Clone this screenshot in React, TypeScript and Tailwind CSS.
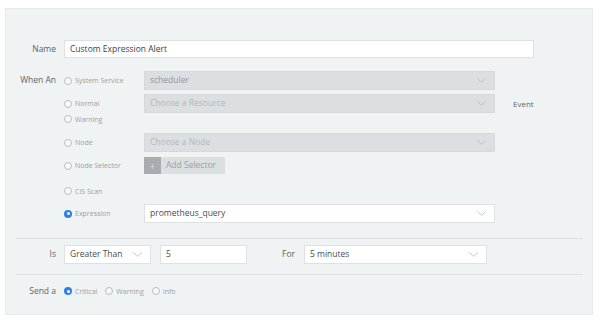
import React from "react";

const FONT = "font-['Open_Sans','Lato',sans-serif]";

function Chevron() {
  return (
    <svg width="9" height="5" viewBox="0 0 9 5" className="shrink-0">
      <path d="M0.5 0.5 L4.5 4.3 L8.5 0.5" fill="none" stroke="#b4b8bb" strokeWidth="0.8" />
    </svg>
  );
}

function Radio({ label, checked = false }: { label: string; checked?: boolean }) {
  return (
    <div className="flex items-center gap-[3px]">
      {checked ? (
        <span className="w-[8px] h-[8px] rounded-full bg-[#2f7fe6] flex items-center justify-center">
          <span className="w-[3px] h-[3px] rounded-full bg-white" />
        </span>
      ) : (
        <span className="w-[8px] h-[8px] rounded-full border border-[#b9bdc0] bg-[#f7f8f9]" />
      )}
      <span className="text-[7px] text-[#9a9ea1] leading-none">{label}</span>
    </div>
  );
}

function Select({
  value,
  w,
  disabled = false,
  placeholder = false,
}: {
  value: string;
  w: string;
  disabled?: boolean;
  placeholder?: boolean;
}) {
  const base = disabled
    ? "bg-[#dcdfe1] border-[#d6d9dc]"
    : "bg-white border-[#dde1e4]";
  const text = placeholder ? "text-[#b3b7ba]" : disabled ? "text-[#909497]" : "text-[#4a4d50]";
  return (
    <div className={`${w} h-[19px] border ${base} flex items-center justify-between pl-[5px] pr-[8px]`}>
      <span className={`text-[8.5px] ${text}`}>{value}</span>
      <Chevron />
    </div>
  );
}

export default function App() {
  return (
    <div className={`w-[600px] h-[322px] bg-white pt-[8px] pl-[5px] ${FONT}`}>
      <div className="w-[588px] h-[307px] bg-[#f0f3f4] border border-[#e7eaec] pt-[31px] pl-[10px] pr-[9px]">
        {/* Name */}
        <div className="flex items-center h-[18px]">
          <div className="w-[40px] text-right text-[8.5px] text-[#5f6366]">Name</div>
          <div className="ml-[8px] w-[470px] h-[18px] bg-white border border-[#dde1e4] flex items-center pl-[5px]">
            <span className="text-[8.5px] text-[#3f4245]">Custom Expression Alert</span>
          </div>
        </div>

        {/* When An */}
        <div className="flex mt-[13px]">
          <div className="w-[40px] h-[19px] flex items-center justify-end text-[8.5px] text-[#5f6366]">When An</div>
          <div className="ml-[8px] flex flex-col">
            <div className="flex h-[19px]">
              <div className="w-[80px] flex items-center">
                <Radio label="System Service" />
              </div>
              <Select value="scheduler" w="w-[351px]" disabled />
            </div>

            <div className="flex mt-[4px] h-[31px]">
              <div className="w-[80px] flex flex-col">
                <div className="h-[19px] flex items-center">
                  <Radio label="Normal" />
                </div>
                <div className="h-[12px] flex items-center">
                  <Radio label="Warning" />
                </div>
              </div>
              <Select value="Choose a Resource" w="w-[351px]" disabled placeholder />
              <div className="ml-[18px] h-[19px] flex items-center text-[8px] text-[#5f6366]">Event</div>
            </div>

            <div className="flex mt-[8px] h-[19px]">
              <div className="w-[80px] flex items-center">
                <Radio label="Node" />
              </div>
              <Select value="Choose a Node" w="w-[351px]" disabled placeholder />
            </div>

            <div className="flex mt-[5px] h-[17px]">
              <div className="w-[80px] flex items-center">
                <Radio label="Node Selector" />
              </div>
              <div className="flex h-[17px]">
                <div className="w-[17px] h-[17px] bg-[#a9acae] flex items-center justify-center text-[11px] text-[#d3d5d7] leading-none">
                  +
                </div>
                <div className="w-[64px] h-[17px] bg-[#dcdfe1] flex items-center pl-[5px] text-[8.5px] text-[#9a9ea1]">
                  Add Selector
                </div>
              </div>
            </div>

            <div className="flex mt-[8px] h-[18px]">
              <div className="w-[80px] flex items-center">
                <Radio label="CIS Scan" />
              </div>
            </div>

            <div className="flex mt-[4px] h-[19px]">
              <div className="w-[80px] flex items-center">
                <Radio label="Expression" checked />
              </div>
              <Select value="prometheus_query" w="w-[351px]" />
            </div>
          </div>
        </div>

        <div className="mt-[15px] border-t border-[#dde1e3]" />

        {/* Is */}
        <div className="flex items-center mt-[6px] h-[19px]">
          <div className="w-[40px] text-right text-[8.5px] text-[#5f6366]">Is</div>
          <div className="ml-[8px]">
            <Select value="Greater Than" w="w-[87px]" />
          </div>
          <div className="ml-[9px] w-[87px] h-[19px] bg-white border border-[#dde1e4] flex items-center pl-[5px] text-[8.5px] text-[#4a4d50]">
            5
          </div>
          <div className="w-[48px] text-right text-[8.5px] text-[#5f6366]">For</div>
          <div className="ml-[9px]">
            <Select value="5 minutes" w="w-[183px]" />
          </div>
        </div>

        <div className="mt-[10px] border-t border-[#dde1e3]" />

        {/* Send a */}
        <div className="flex items-center mt-[9px] h-[14px]">
          <div className="w-[40px] text-right text-[8.5px] text-[#5f6366]">Send a</div>
          <div className="ml-[8px] flex items-center gap-[8px]">
            <Radio label="Critical" checked />
            <Radio label="Warning" />
            <Radio label="Info" />
          </div>
        </div>
      </div>
    </div>
  );
}
